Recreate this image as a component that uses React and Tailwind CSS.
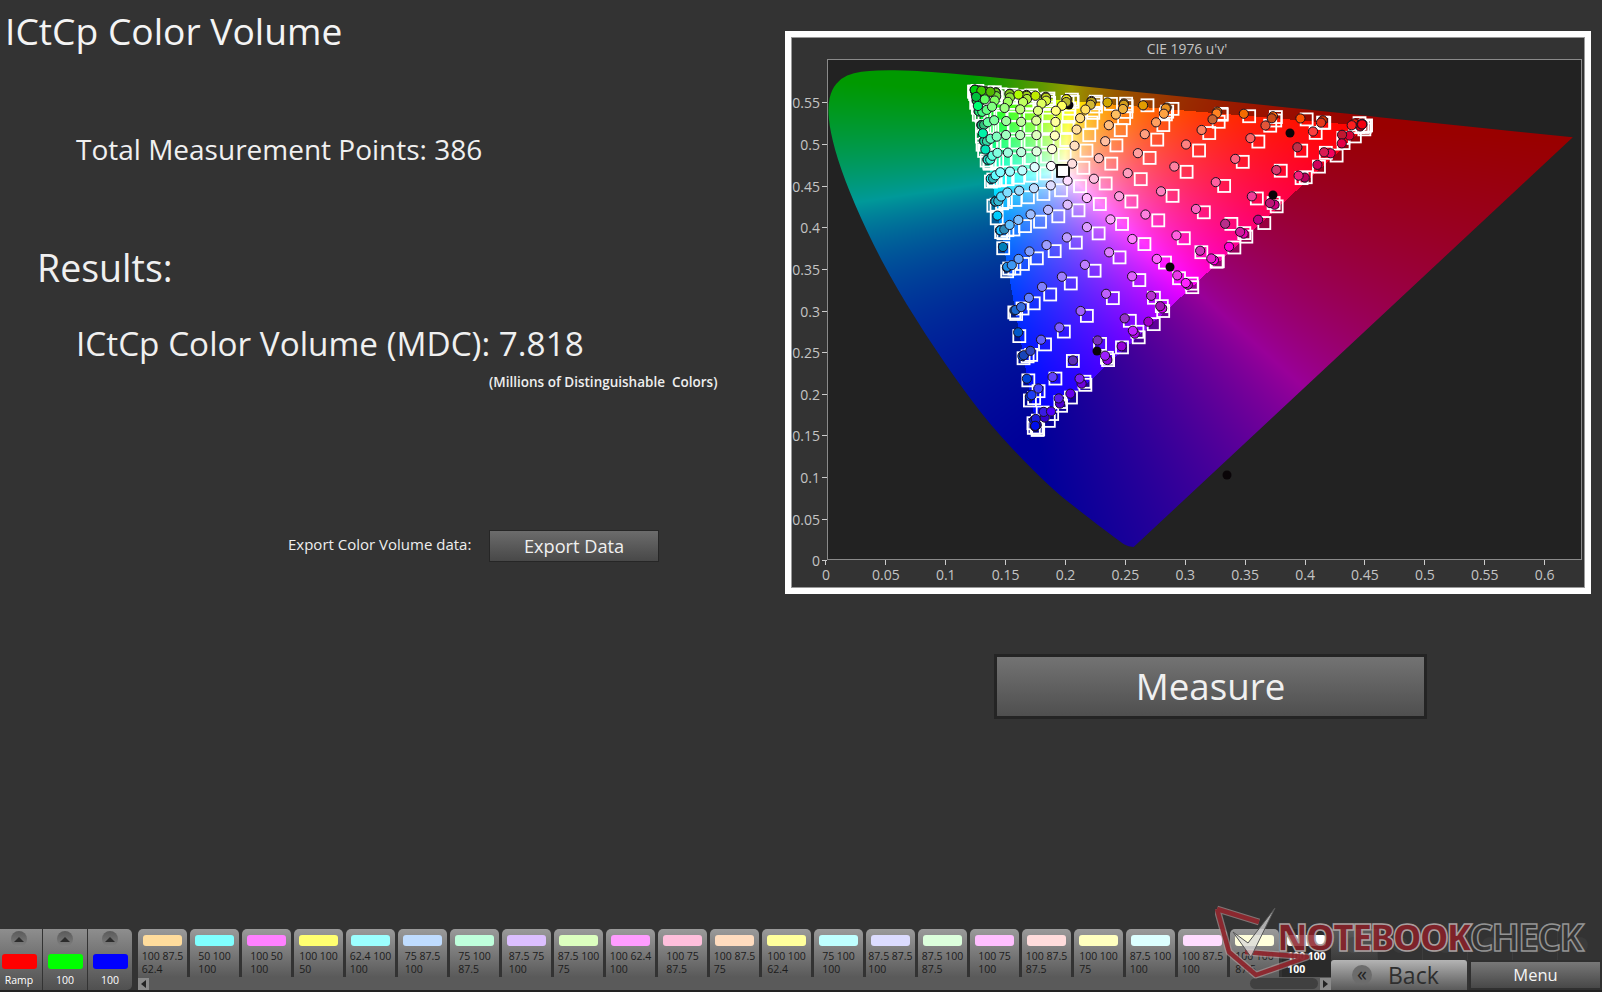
import { useEffect, useRef } from "react";

const tiles = [
  ["100 87.5", "62.4", "#ffdc9c"],
  ["50 100", "100", "#80ffff"],
  ["100 50", "100", "#ff80ff"],
  ["100 100", "50", "#ffff70"],
  ["62.4 100", "100", "#9cffff"],
  ["75 87.5", "100", "#bfdcff"],
  ["75 100", "87.5", "#bfffdc"],
  ["87.5 75", "100", "#dcbfff"],
  ["87.5 100", "75", "#dcffbf"],
  ["100 62.4", "100", "#ff9cff"],
  ["100 75", "87.5", "#ffbfdc"],
  ["100 87.5", "75", "#ffdcbf"],
  ["100 100", "62.4", "#ffff9c"],
  ["75 100", "100", "#bfffff"],
  ["87.5 87.5", "100", "#dcdcff"],
  ["87.5 100", "87.5", "#dcffdc"],
  ["100 75", "100", "#ffbfff"],
  ["100 87.5", "87.5", "#ffdcdc"],
  ["100 100", "75", "#ffffbf"],
  ["87.5 100", "100", "#dcffff"],
  ["100 87.5", "100", "#ffdcff"],
  ["100 100", "87.5", "#ffffdc"],
];

// spectral locus, CIE 1931 xy
const locus = [
  [0.1741, 0.005], [0.1714, 0.0051], [0.1689, 0.0069], [0.1644, 0.0109], [0.1566, 0.0177], [0.144, 0.0297],
  [0.1241, 0.0578], [0.1096, 0.0868], [0.0913, 0.1327], [0.0687, 0.2007], [0.0454, 0.295],
  [0.0235, 0.4127], [0.0082, 0.5384], [0.0039, 0.6548], [0.0139, 0.7502], [0.0389, 0.812],
  [0.0743, 0.8338], [0.1142, 0.8262], [0.1547, 0.8059], [0.1929, 0.7816], [0.2296, 0.7543],
  [0.3016, 0.6923], [0.3731, 0.6245], [0.4441, 0.5547], [0.5125, 0.4866], [0.5752, 0.4242],
  [0.627, 0.3725], [0.6915, 0.3083], [0.7347, 0.2653],
];

const px = (u) => u * 1198 - 2;
const py = (v) => 501 - v * 833;

function rgbToUV(r, g, b) {
  const X = 0.4124 * r + 0.3576 * g + 0.1805 * b;
  const Y = 0.2126 * r + 0.7152 * g + 0.0722 * b;
  const Z = 0.0193 * r + 0.1192 * g + 0.9505 * b;
  const d = X + 15 * Y + 3 * Z;
  return [(4 * X) / d, (9 * Y) / d];
}

function drawField(ctx, w, h) {
  const off = document.createElement("canvas");
  off.width = w;
  off.height = h;
  const octx = off.getContext("2d");
  const img = octx.createImageData(w, h);
  for (let j = 0; j < h; j++) {
    for (let i = 0; i < w; i++) {
      const u = (i + 2) / 1198;
      const v = (501 - j) / 833;
      const vv = Math.max(v, 0.001);
      const den = 6 * u - 16 * vv + 12;
      const x = (9 * u) / den;
      const y = (4 * vv) / den;
      const X = x / y;
      const Z = (1 - x - y) / y;
      let r = 3.2406 * X - 1.5372 - 0.4986 * Z;
      let g = -0.9689 * X + 1.8758 + 0.0415 * Z;
      let b = 0.0557 * X - 0.204 + 1.057 * Z;
      const out = Math.min(r, g, b) < 0;
      r = Math.max(r, 0);
      g = Math.max(g, 0);
      b = Math.max(b, 0);
      const m = Math.max(r, g, b, 0.0001);
      const k = out ? 153 : 255;
      const p = (j * w + i) * 4;
      img.data[p] = (r / m) * k;
      img.data[p + 1] = (g / m) * k;
      img.data[p + 2] = (b / m) * k;
      img.data[p + 3] = 255;
    }
  }
  octx.putImageData(img, 0, 0);
  const pts = locus.map(([x, y]) => {
    const d = -2 * x + 12 * y + 3;
    const v = (9 * y) / d;
    return [px((4 * x) / d), py(v) - (2 * v) / 0.58];
  });
  ctx.save();
  ctx.beginPath();
  ctx.moveTo(pts[0][0], pts[0][1]);
  for (let i = 1; i < pts.length - 1; i++) {
    const mx = (pts[i][0] + pts[i + 1][0]) / 2;
    const my = (pts[i][1] + pts[i + 1][1]) / 2;
    ctx.quadraticCurveTo(pts[i][0], pts[i][1], mx, my);
  }
  ctx.lineTo(pts[pts.length - 1][0], pts[pts.length - 1][1]);
  ctx.closePath();
  ctx.clip();
  ctx.drawImage(off, 0, 0);
  ctx.restore();
}

function drawPoints(ctx) {
  const levels = [0, 0.125, 0.25, 0.375, 0.5, 0.624, 0.75, 0.875, 1];
  const fine = [0.06, 0.19, 0.31, 0.44, 0.56, 0.69, 0.81, 0.94];
  const pts = [];
  levels.forEach((r) =>
    levels.forEach((g) =>
      levels.forEach((b) => {
        if (Math.max(r, g, b) === 1) pts.push([r, g, b]);
      })
    )
  );
  // extra readings along the gamut edges
  fine.forEach((f, i) => {
    if (i % 3 !== 1) pts.push([1, f, 0], [f, 1, 0], [1, 0, f], [f, 0, 1], [0, 1, f], [0, f, 1]);
  });
  const lin = (s) => Math.pow(s, 2.4);
  const placed = pts.map(([r, g, b], i) => {
    const [u, v] = rgbToUV(lin(r), lin(g), lin(b));
    const low = Math.min(r, g, b);
    const amt = low < 0.3 ? 0.3 : low < 0.45 ? 0.65 : 1;
    const wob = ((i * 37) % 11) / 11 - 0.5;
    const jit = low < 0.3 ? ((i * 29) % 7) - 3 : 0;
    const dim = low < 0.3 ? 0.72 + ((i * 53) % 10) / 30 : 1;
    return {
      x: px(u) + jit * 0.8,
      y: py(v) + ((i * 17) % 5 - 2) * (low < 0.3 ? 0.8 : 0),
      cx: px(u) + (-3 - 9 * r + wob * 2) * amt,
      cy: py(v) + (-9 + 4 * r + wob * 2) * amt,
      fill: `rgb(${r * 255 * dim},${g * 255 * dim},${b * 255 * dim})`,
      white: r === 1 && g === 1 && b === 1,
    };
  });
  ctx.lineWidth = 1.8;
  ctx.strokeStyle = "#ffffff";
  placed.forEach((p) => {
    if (p.white) return;
    ctx.strokeRect(p.x - 6, p.y - 6, 12, 12);
  });
  const wp = placed.find((p) => p.white);
  ctx.fillStyle = "rgba(255,255,255,0.85)";
  ctx.fillRect(wp.x - 6, wp.y - 6, 12, 12);
  ctx.strokeStyle = "#000000";
  ctx.strokeRect(wp.x - 6, wp.y - 6, 12, 12);

  [[1069, 105]].forEach(([x, y]) => {
    ctx.beginPath();
    ctx.arc(x - 828, y - 60, 4.5, 0, Math.PI * 2);
    ctx.fillStyle = "#0a0508";
    ctx.fill();
  });
  ctx.lineWidth = 1;
  ctx.strokeStyle = "#1a1020";
  placed.forEach((p) => {
    ctx.beginPath();
    ctx.arc(p.cx, p.cy, 4.6, 0, Math.PI * 2);
    ctx.fillStyle = p.fill;
    ctx.fill();
    ctx.stroke();
  });
  // stray black readings
  [[1290, 133], [1273, 195], [1170, 267], [1227, 475], [1097, 351]].forEach(([x, y]) => {
    ctx.beginPath();
    ctx.arc(x - 828, y - 60, 4.5, 0, Math.PI * 2);
    ctx.fillStyle = "#0a0508";
    ctx.fill();
  });
}

function GamutCanvas() {
  const ref = useRef(null);
  useEffect(() => {
    const ctx = ref.current.getContext("2d");
    drawField(ctx, 753, 499);
    drawPoints(ctx);
  }, []);
  return <canvas ref={ref} width={753} height={499} className="block" />;
}

function Chart() {
  const yTicks = ["0.55", "0.5", "0.45", "0.4", "0.35", "0.3", "0.25", "0.2", "0.15", "0.1", "0.05", "0"];
  const xTicks = ["0", "0.05", "0.1", "0.15", "0.2", "0.25", "0.3", "0.35", "0.4", "0.45", "0.5", "0.55", "0.6"];
  return (
    <div className="w-[806px] h-[563px] border-[6px] border-white bg-[#333333] shadow-[inset_0_0_0_1px_#999999] text-[14px] text-[#c4c4c4]">
      <div className="h-[22px] flex items-end justify-center text-[13.8px] leading-[17px] pr-[2px] pb-[2px]">CIE 1976 u'v'</div>
      <div className="flex">
        <div className="w-[36px] h-[501px] pt-[23px] shrink-0">
          {yTicks.map((t) => (
            <div key={t} className="h-[41.65px] flex items-center justify-end">
              <span className="mr-[2px]">{t}</span>
              <span className="w-[5px] h-px bg-[#cccccc]" />
            </div>
          ))}
        </div>
        <div className="w-[755px] h-[501px] border border-[#8a8a8a] bg-[#222222]">
          <GamutCanvas />
        </div>
      </div>
      <div className="flex pl-[5px]">
        {xTicks.map((t) => (
          <div key={t} className="w-[59.9px] flex flex-col items-center">
            <span className="w-px h-[5px] bg-[#cccccc]" />
            <span className="leading-[20px]">{t}</span>
          </div>
        ))}
      </div>
    </div>
  );
}

function RampKnob({ color, label, width }) {
  return (
    <div className={`${width} h-[61px] flex flex-col items-center bg-gradient-to-b from-[#8e8e8e] to-[#505050]`}>
      <div className="mt-[2px] w-[16px] h-[16px] rounded-full bg-gradient-to-b from-[#5a5a5a] to-[#808080] flex items-center justify-center">
        <div className="w-0 h-0 border-x-[5px] border-x-transparent border-b-[5px] border-b-[#2c2c2c]" />
      </div>
      <div className="mt-[7px] w-[35px] h-[15px] rounded-[3px]" style={{ background: color }} />
      <div className="mt-[4px] text-[10.5px] leading-[14px] text-white">{label}</div>
    </div>
  );
}

function Tile({ top, bottom, color }) {
  return (
    <div className="w-[49px] h-[48px] shrink-0 rounded-t-[5px] bg-gradient-to-b from-[#9a9a9a] to-[#5a5a5a] px-[1px] pt-[6px]">
      <div className="mx-[4px] h-[11px] rounded-[3px]" style={{ background: color }} />
      <div className="flex justify-center mt-[4px] text-[10.5px] leading-[12.5px] text-[#1c1c1c] whitespace-nowrap">
        <div>
          <div>{top}</div>
          <div>{bottom}</div>
        </div>
      </div>
    </div>
  );
}

function Watermark() {
  return (
    <div className="absolute left-[1215px] top-[905px] flex items-start pointer-events-none">
      <svg width="100" height="76" viewBox="0 0 100 76" className="shrink-0 -mr-[38px]">
        <path d="M2 4 L44 17 M2 4 L14 47 L41 70 L92 52 L30 47" fill="none" stroke="#b5a0a0" strokeOpacity="0.6" strokeWidth="7" strokeLinejoin="round" />
        <path d="M2 4 L44 17 M2 4 L14 47 L41 70 L92 52 L30 47" fill="none" stroke="#8c2028" strokeOpacity="0.9" strokeWidth="4.5" strokeLinejoin="round" />
        <path d="M18 27 L33 38 L60 3 L36 52 Z" fill="#d8d8d8" fillOpacity="0.75" stroke="#555555" strokeWidth="1" />
      </svg>
      <span className="mt-[13px] font-extrabold text-[37px] leading-none tracking-[-2.4px] text-[#8c2028dd] [-webkit-text-stroke:1.5px_#a8a0a0]">NOTEBOOK</span>
      <span className="mt-[13px] font-bold text-[37px] leading-none tracking-[-1.6px] text-transparent [-webkit-text-stroke:1.5px_#949494]">CHECK</span>
    </div>
  );
}

export default function App() {
  return (
    <div className="relative w-[1602px] h-[992px] overflow-hidden bg-[#333333] flex flex-col font-['Open_Sans',sans-serif] text-white">
      <div className="flex flex-1">
        <div className="w-[785px] shrink-0">
          <h1 className="pl-[5px] pt-[8px] text-[37.2px] leading-[46px] font-normal text-[#f4f4f4]">ICtCp Color Volume</h1>
          <div className="pl-[76px] mt-[76px] text-[28px] leading-[38px] text-[#f0f0f0]">Total Measurement Points: 386</div>
          <div className="pl-[37px] mt-[77px] text-[37.5px] leading-[46px] text-[#f0f0f0]">Results:</div>
          <div className="pl-[76px] mt-[30px] text-[33.3px] leading-[44px] text-[#f0f0f0]">ICtCp Color Volume (MDC): 7.818</div>
          <div className="pl-[489px] mt-[7px] text-[13.5px] leading-[20px] font-semibold whitespace-pre text-[#eeeeee]">(Millions of Distinguishable  Colors)</div>
          <div className="flex items-center mt-[138px] pl-[288px]">
            <span className="text-[15px] text-[#eeeeee] w-[201px] pb-[4px]">Export Color Volume data:</span>
            <button className="w-[170px] h-[32px] border border-[#262626] bg-gradient-to-b from-[#6c6c6c] to-[#484848] text-[18.2px] text-[#f0f0f0] leading-none">Export Data</button>
          </div>
        </div>
        <div className="flex-1 pt-[31px]">
          <Chart />
          <button className="block ml-[209px] mt-[60px] w-[433px] h-[65px] border-[3px] border-[#242424] bg-gradient-to-b from-[#737373] to-[#4f4f4f] text-[36.7px] leading-none text-[#f0f0f0]">Measure</button>
        </div>
      </div>

      <div className="h-[61px] flex">
        <div className="flex gap-[1px] w-[132px] shrink-0 rounded-r-[5px] overflow-hidden">
          <RampKnob color="#ff0000" label="Ramp" width="w-[42px] pr-[4px]" />
          <RampKnob color="#00ff00" label="100" width="w-[44px]" />
          <RampKnob color="#0000ff" label="100" width="w-[44px]" />
        </div>
        <div className="ml-[6px] w-[1193px] shrink-0 flex flex-col">
          <div className="flex gap-[3px]">
            {tiles.map(([top, bottom, color], i) => (
              <Tile key={i} top={top} bottom={bottom} color={color} />
            ))}
            <div className="w-[49px] h-[48px] shrink-0 rounded-t-[5px] bg-[#2a2a2a] pt-[6px] px-[1px]">
              <div className="mx-[4px] h-[11px] rounded-[3px] bg-white" />
              <div className="flex justify-center mt-[4px] text-[10.5px] leading-[12.5px] font-bold text-white whitespace-nowrap">
                <div>
                  <div>100 100</div>
                  <div>100</div>
                </div>
              </div>
            </div>
          </div>
          <div className="h-[13px] bg-[#5a5a5a] flex items-center justify-between">
            <div className="w-[11px] h-[12px] bg-[#8a8a8a] flex items-center justify-center">
              <div className="w-0 h-0 border-y-[4px] border-y-transparent border-r-[5px] border-r-[#222222]" />
            </div>
            <div className="ml-auto w-[68px] h-[11px] rounded-full bg-[#404040]" />
            <div className="ml-[2px] w-[11px] h-[12px] bg-[#8a8a8a] flex items-center justify-center">
              <div className="w-0 h-0 border-y-[4px] border-y-transparent border-l-[5px] border-l-[#222222]" />
            </div>
          </div>
        </div>
        <div className="flex-1 flex flex-col">
          <div className="h-[31px] flex">
            <div className="w-[46px] bg-gradient-to-b from-[#5c5c5c] to-[#3c3c3c] flex justify-center pt-[8px]">
              <div className="w-[16px] h-[16px] rounded-full bg-[#4c4c4c]" />
            </div>
            {[0, 1, 2, 3, 4].map((i) => (
              <div key={i} className="w-[45px] border-l border-[#3c3c3c] flex justify-center pt-[8px]">
                <div className="w-[16px] h-[16px] rounded-full bg-[#3a3a3a]" />
              </div>
            ))}
          </div>
          <div className="h-[30px] flex gap-[2px]">
            <div className="w-[136px] bg-gradient-to-b from-[#b4b4b4] to-[#5a5a5a] rounded-t-[3px] flex items-center text-[#2e2e2e]">
              <span className="ml-[21px] w-[20px] h-[20px] rounded-full bg-[#6c6c6c] flex items-center justify-center text-[20px] leading-none text-[#222222] pb-[3px]">«</span>
              <span className="ml-[16px] text-[23px] leading-none">Back</span>
            </div>
            <div className="flex-1 border-2 border-[#303030] bg-gradient-to-b from-[#787878] to-[#484848] flex items-center justify-center text-[16.5px] leading-none text-[#f4f4f4]">Menu</div>
          </div>
        </div>
      </div>
      <div className="h-[2px] bg-[#222222]" />
      <Watermark />
    </div>
  );
}
